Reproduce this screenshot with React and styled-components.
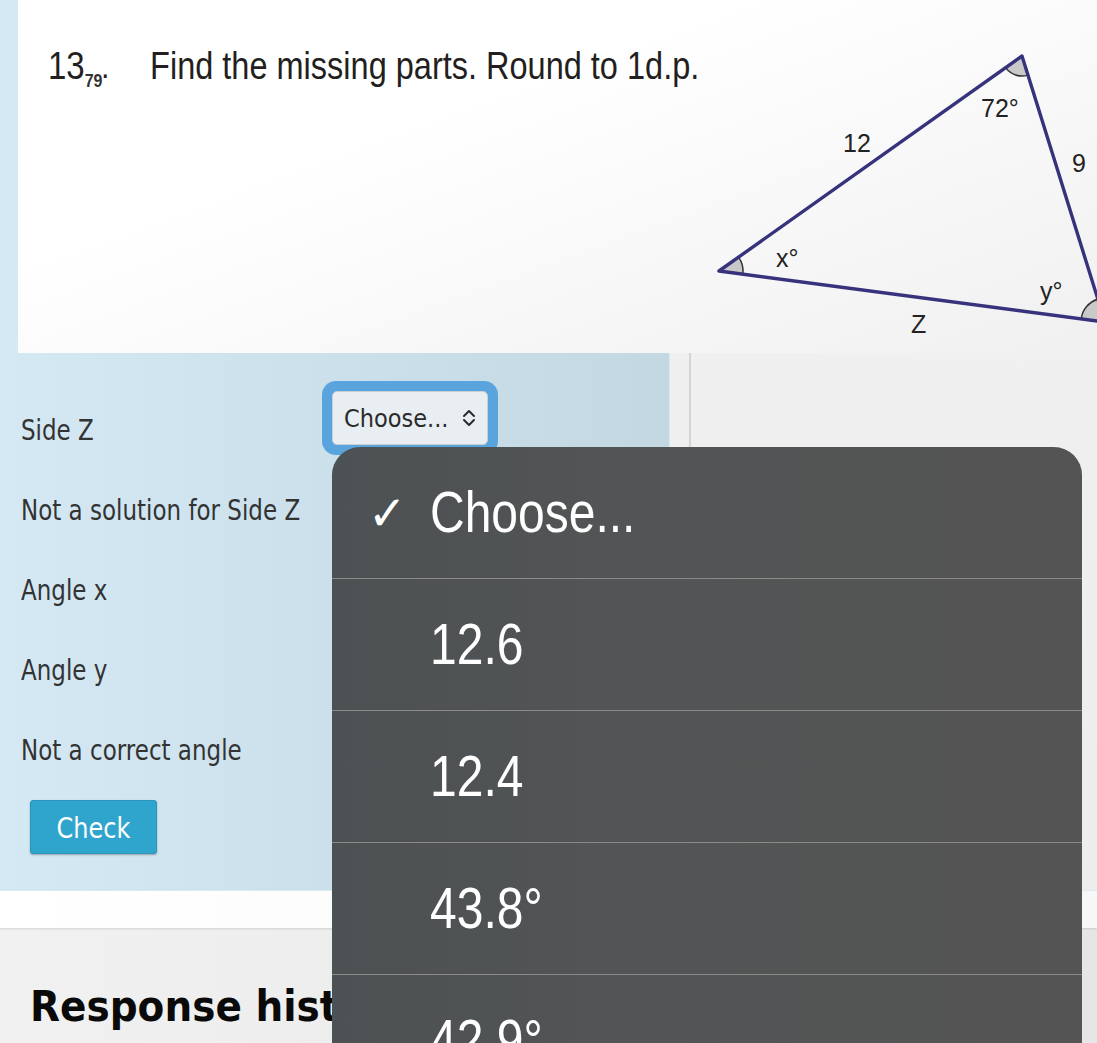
import React from "react";
import styled, { createGlobalStyle, css } from "styled-components";

const GlobalStyle = createGlobalStyle`
  html, body { margin: 0; padding: 0; overflow: hidden; }
  body { background: #ececec; font-family: "DejaVu Sans", Verdana, sans-serif; }
`;

const tall = css`
  display: inline-block;
  transform: scaleY(1.2);
  transform-origin: center;
`;

const Page = styled.div`
  position: relative;
  width: 1097px;
  height: 1043px;
  overflow: hidden;
`;

const TopSection = styled.section`
  display: flex;
  height: 353px;
  background: #d5e9f4;
`;

const QuestionImage = styled.div`
  flex: 1;
  margin-left: 18px;
  display: flex;
  justify-content: space-between;
  overflow: hidden;
  background: linear-gradient(160deg, #ffffff 35%, #f0f0f0 100%);
`;

const Title = styled.h1`
  margin: 0;
  padding: 46px 0 0 30px;
  height: 40px;
  line-height: 40px;
  font-family: "Liberation Sans", Arial, sans-serif;
  font-weight: normal;
  font-size: 32.5px;
  color: #231f20;
  white-space: nowrap;
  display: flex;
  align-items: baseline;
`;

const Num = styled.span`
  ${tall}
  font-size: 33px;
`;

const Sub = styled.span`
  ${tall}
  font-size: 16px;
  font-weight: bold;
  color: #333;
  position: relative;
  top: 9px;
  margin-left: 0px;
`;

const Dot = styled.span`
  ${tall}
  font-size: 20px;
  font-weight: bold;
  margin-right: 42px;
`;

const TitleText = styled.span`
  ${tall}
`;

const Diagram = styled.svg`
  flex-shrink: 0;
  width: 397px;
  height: 353px;
  display: block;
`;

const Middle = styled.section`
  display: flex;
  height: 537px;
`;

const FormPanel = styled.div`
  width: 670px;
  box-sizing: border-box;
  padding: 37px 0 0 21px;
  background: linear-gradient(90deg, #d5e9f4 0%, #cce1ec 45%, #c3d8e3 100%);
  border-right: 1px solid #d7ecef;
`;

const Row = styled.div`
  display: flex;
  align-items: center;
  height: 80px;
`;

const Label = styled.span`
  ${tall}
  width: 312px;
  font-size: 23px;
  color: #333;
  white-space: nowrap;
`;

const SelectRing = styled.div`
  align-self: flex-start;
  margin-top: -9px;
  padding: 10px;
  border-radius: 14px;
  background: #5aa4de;
  margin-left: -11px;
`;

const SelectBox = styled.div`
  width: 156px;
  height: 54px;
  box-sizing: border-box;
  padding: 0 10px 0 11px;
  display: flex;
  align-items: center;
  justify-content: space-between;
  background: #e8eef1;
  border: 1px solid #c6d0d5;
  border-radius: 5px;
  font-size: 22.5px;
  color: #2b2b2b;
`;

const SelectText = styled.span`
  ${tall}
  transform: scaleY(1.1);
`;

const CheckButton = styled.button`
  margin: 10px 0 0 9px;
  width: 127px;
  height: 54px;
  border: 1px solid #2b95bb;
  border-radius: 3px;
  background: #2fa4cd;
  box-shadow: 0 1px 2px rgba(0, 0, 0, 0.3);
  color: #ffffff;
  font-family: "DejaVu Sans", Verdana, sans-serif;
  font-size: 24px;
  padding: 4px 0 0;
`;

const ButtonText = styled.span`
  ${tall}
  transform: scaleY(1.15);
`;

const RightPane = styled.div`
  flex: 1;
  display: flex;
  background: linear-gradient(180deg, #f0f0f0, #ededed);
`;

const Divider = styled.div`
  width: 2px;
  margin-left: 19px;
  background: #d4d4d4;
`;

const Band = styled.div`
  height: 38px;
  background: linear-gradient(90deg, #ffffff 0%, #f7f7f7 100%);
  border-top: 1px solid #d9ecf2;
  box-sizing: border-box;
  box-shadow: 0 1px 2px rgba(0, 0, 0, 0.12);
  position: relative;
`;

const Lower = styled.section`
  height: 200px;
  padding: 57px 0 0 30px;
  box-sizing: border-box;
  background: linear-gradient(90deg, #f1f1f1 0%, #e6e6e6 100%);
`;

const Heading = styled.h2`
  ${tall}
  transform: scaleY(1.1);
  margin: 0;
  line-height: 44px;
  font-size: 39px;
  font-weight: bold;
  color: #0a0a0a;
  white-space: nowrap;
`;

const Menu = styled.ul`
  position: absolute;
  top: 447px;
  left: 332px;
  width: 750px;
  height: 700px;
  margin: 0;
  padding: 0;
  list-style: none;
  border-radius: 28px 28px 0 0;
  overflow: hidden;
  background: linear-gradient(90deg, #4c5153 0%, #525455 35%, #545454 100%);
`;

const MenuItem = styled.li`
  height: 131px;
  display: flex;
  align-items: center;
  padding-left: 36px;
  border-bottom: 1px solid #8a8a8a;
  color: #ffffff;
  font-family: "Liberation Sans", Arial, sans-serif;
  font-size: 48px;
`;

const Mark = styled.span`
  ${tall}
  width: 62px;
  font-family: "DejaVu Sans", sans-serif;
  font-size: 46px;
  transform: scaleY(1.05);
`;

const ItemText = styled.span`
  ${tall}
`;

const ChevronIcon = () => (
  <svg width="16" height="20" viewBox="0 0 16 20" fill="none" stroke="#2b2b2b" strokeWidth="2" strokeLinecap="round" strokeLinejoin="round">
    <path d="M3 8 L8 3 L13 8" />
    <path d="M3 12 L8 17 L13 12" />
  </svg>
);

const TriangleDrawing = () => (
  <Diagram viewBox="700 0 397 353">
    <g fill="#c9c9c9" stroke="#333" strokeWidth="1.5">
      <path d="M1022,56 L1005.7,67.6 A20,20 0 0 0 1028,75.1 Z" />
      <path d="M719,271 L738.6,257.1 A24,24 0 0 1 742.8,274.1 Z" />
      <path d="M1105,322 L1097.8,299.1 A24,24 0 0 0 1081.2,318.9 Z" />
    </g>
    <path d="M719,271 L1022,56 L1105,322 Z" fill="none" stroke="#36337c" strokeWidth="3.4" strokeLinejoin="round" />
    <g fill="#222" fontFamily="Liberation Sans, Arial, sans-serif" fontSize="25">
      <text x="843" y="152">12</text>
      <text x="981" y="117">72°</text>
      <text x="1072" y="172">9</text>
      <text x="776" y="267">x°</text>
      <text x="1040" y="300">y°</text>
      <text x="911" y="333">Z</text>
    </g>
  </Diagram>
);

const labels = ["Side Z", "Not a solution for Side Z", "Angle x", "Angle y", "Not a correct angle"];
const options = ["Choose...", "12.6", "12.4", "43.8°", "42.9°"];

export default function App() {
  return (
    <Page>
      <GlobalStyle />
      <TopSection>
        <QuestionImage>
          <Title>
            <Num>13</Num>
            <Sub>79</Sub>
            <Dot>.</Dot>
            <TitleText>Find the missing parts. Round to 1d.p.</TitleText>
          </Title>
          <TriangleDrawing />
        </QuestionImage>
      </TopSection>
      <Middle>
        <FormPanel>
          {labels.map((l, i) => (
            <Row key={l}>
              <Label>{l}</Label>
              {i === 0 && (
                <SelectRing>
                  <SelectBox>
                    <SelectText>Choose...</SelectText>
                    <ChevronIcon />
                  </SelectBox>
                </SelectRing>
              )}
            </Row>
          ))}
          <CheckButton>
            <ButtonText>Check</ButtonText>
          </CheckButton>
        </FormPanel>
        <RightPane>
          <Divider />
        </RightPane>
      </Middle>
      <Band />
      <Lower>
        <Heading>Response history</Heading>
      </Lower>
      <Menu>
        {options.map((o, i) => (
          <MenuItem key={o}>
            <Mark>{i === 0 ? "✓" : ""}</Mark>
            <ItemText>{o}</ItemText>
          </MenuItem>
        ))}
      </Menu>
    </Page>
  );
}
